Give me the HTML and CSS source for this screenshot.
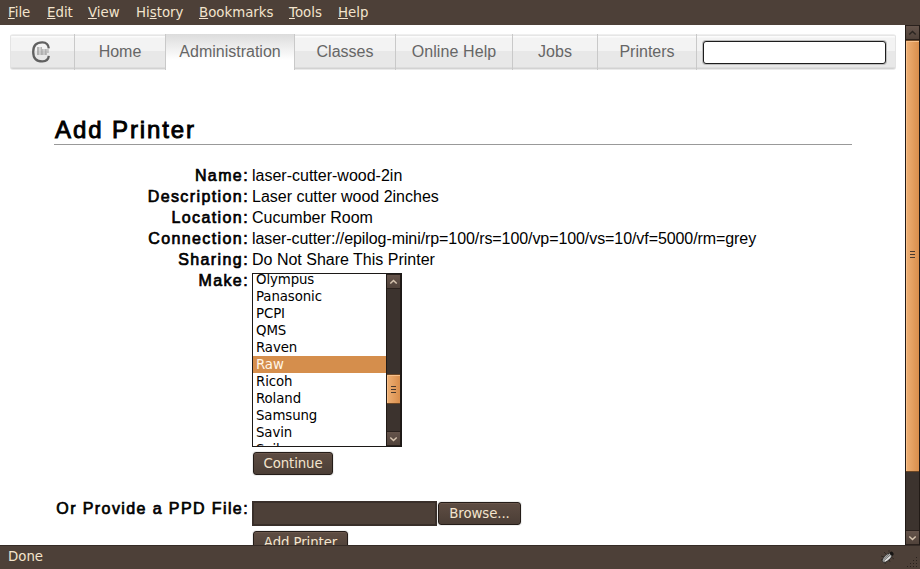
FILE: index.html
```html
<!DOCTYPE html>
<html lang="en">
<head>
<meta charset="utf-8">
<title>Add Printer</title>
<link rel="stylesheet" href="styles.css">
</head>
<body>
<nav class="menubar">
  <span class="m-file"><u>F</u>ile</span><span class="m-edit"><u>E</u>dit</span><span class="m-view"><u>V</u>iew</span><span class="m-history">Hi<u>s</u>tory</span><span class="m-bookmarks"><u>B</u>ookmarks</span><span class="m-tools"><u>T</u>ools</span><span class="m-help"><u>H</u>elp</span>
</nav>
<div class="viewport">
  <main class="page">
    <div class="tabs">
      <a class="tab logo"><svg width="20" height="22" viewBox="0 0 20 22"><path d="M17.8 7.4Q17.2 1.6 11.5 1.4Q2.2 1.2 2.2 10.9T11.5 20.4Q17.2 20.2 17.8 14.8" fill="none" stroke="#606060" stroke-width="2.3"/><path d="M6 7h5M6 9h12M6 11h12M6 13h10" fill="none" stroke="#777" stroke-width="1.2" stroke-dasharray="2 .5 1 .4"/></svg></a>
      <a class="tab home">Home</a>
      <a class="tab admin active">Administration</a>
      <a class="tab classes">Classes</a>
      <a class="tab online">Online Help</a>
      <a class="tab jobs">Jobs</a>
      <a class="tab printers">Printers</a>
      <div class="search"><input type="text" aria-label="Search"></div>
    </div>
    <section class="content">
      <h2>Add Printer</h2>
      <div class="form">
        <div class="label">Name:</div><div>laser-cutter-wood-2in</div>
        <div class="label">Description:</div><div>Laser cutter wood 2inches</div>
        <div class="label">Location:</div><div>Cucumber Room</div>
        <div class="label">Connection:</div><div class="uri">laser-cutter://epilog-mini/rp=100/rs=100/vp=100/vs=10/vf=5000/rm=grey</div>
        <div class="label">Sharing:</div><div>Do Not Share This Printer</div>
        <div class="label">Make:</div>
        <div class="make">
          <div class="listbox">
            <div class="options">
              <div>Olympus</div><div>Panasonic</div><div>PCPI</div><div>QMS</div><div>Raven</div><div class="selected">Raw</div><div>Ricoh</div><div>Roland</div><div>Samsung</div><div>Savin</div><div>Seiko</div>
            </div>
            <div class="scrollbar list-scroll">
              <div class="arrow"><svg width="9" height="6" viewBox="0 0 9 6"><path d="M1.3 4.5l3.2-3 3.2 3"/></svg></div>
              <div class="track"><div class="thumb"><i></i><i></i><i></i></div></div>
              <div class="arrow"><svg width="9" height="6" viewBox="0 0 9 6"><path d="M1.3 1.5l3.2 3 3.2-3"/></svg></div>
            </div>
          </div>
          <button class="continue">Continue</button>
        </div>
        <div class="label">Or Provide a PPD File:</div>
        <div class="upload">
          <div class="file-row"><div class="file"></div><button class="browse">Browse...</button></div>
          <button class="add">Add Printer</button>
        </div>
      </div>
    </section>
  </main>
  <div class="scrollbar page-scroll">
    <div class="arrow disabled"><svg width="9" height="6" viewBox="0 0 9 6"><path d="M1.3 4.5l3.2-3 3.2 3"/></svg></div>
    <div class="track"><div class="thumb"><i></i><i></i><i></i></div></div>
    <div class="arrow"><svg width="9" height="6" viewBox="0 0 9 6"><path d="M1.3 1.5l3.2 3 3.2-3"/></svg></div>
  </div>
</div>
<footer class="status"><span>Done</span>
  <svg class="bug" width="18" height="18" viewBox="0 0 18 18"><path d="M5 4l2 2M10 2l0 2M2 8l3 1M2 12l2-1M6 16l1-3M11 14l-1-3M15 11l-3-2" fill="none" stroke="#2b2420" stroke-width=".8"/><g transform="rotate(-42 9 9)"><ellipse cx="8" cy="9" rx="6.2" ry="2.9" fill="#b6b6b4" stroke="#292725" stroke-width=".8"/><path d="M2 9h11M4 7.5h8" stroke="#666" stroke-width=".8"/><path d="M4 10.2h7" stroke="#eee"/><ellipse cx="14" cy="9" rx="1.7" ry="2.2" fill="#161413"/></g></svg>
  <svg class="grip" width="12" height="12" viewBox="0 0 12 12"><path d="M9 1h1v1H9zM6 4h1v1H6zM9 4h1v1H9zM3 7h1v1H3zM6 7h1v1H6zM9 7h1v1H9zM0 10h1v1H0zM3 10h1v1H3zM6 10h1v1H6zM9 10h1v1H9z" fill="#29211d"/></svg>
</footer>
</body>
</html>
```
FILE: styles.css
```css
* { box-sizing: border-box; }
body {
  margin: 0;
  height: 569px;
  display: flex;
  flex-direction: column;
  overflow: hidden;
  background: #fff;
  font: 16px/21px "Liberation Sans", Arial, sans-serif;
  color: #000;
}
.menubar, .status, .listbox, button {
  font-family: "DejaVu Sans", sans-serif;
  font-size: 13.33px;
}
.listbox, button { letter-spacing: -.1px; }
.menubar {
  height: 25px;
  flex: none;
  display: flex;
  padding: 1px 0 0 8px;
  line-height: 24px;
  background: #4d4038;
  color: #f3e4cd;
}
.menubar u { text-underline-offset: 1px; text-decoration-thickness: 1px; text-decoration-skip-ink: none; }
.m-file { width: 39px; }
.m-edit { width: 41px; }
.m-view { width: 48px; }
.m-history { width: 63px; }
.m-bookmarks { width: 90px; }
.m-tools { width: 49px; }

.viewport { height: 520px; flex: none; display: flex; overflow: hidden; }
.page { width: 905px; height: 520px; padding: 9px 9px 0 10px; overflow: hidden; }
.tabs {
  display: flex;
  height: 36px;
  border: 1px solid #e4e4e4;
  border-top-color: #efefef;
  border-bottom-color: #eaeaea;
  border-radius: 3px;
  background: linear-gradient(#e6e6e6 0 1px, #fcfcfc 1px 2px, #f3f3f3 3px 16px, #e8e8e8 16px 32px, #d2d2d2 33px);
}
.tab {
  display: block;
  height: 36px;
  margin-top: -1px;
  border-right: 1px solid #c9c9c9;
  line-height: 35px;
  text-align: center;
  color: #666;
}
.logo { width: 64px; padding: 7px 3px 0 0; line-height: 0; }
.home { width: 91px; }
.admin { width: 129px; }
.classes { width: 101px; }
.online { width: 117px; letter-spacing: .1px; }
.jobs { width: 85px; }
.printers { width: 99px; }
.active { background: linear-gradient(#dcdcdc, #fff 26px); }
.search { padding: 6px 0 0 6px; }
.search input {
  display: block;
  width: 183px;
  height: 23px;
  padding: 0 4px;
  border: 1px solid #1d1d1d;
  border-radius: 3px;
  background: #fff;
  box-shadow: 0 0 0 1px #bdbdbd;
}
.content { margin: 45px 44px 0; width: 798px; }
h2 {
  margin: 0;
  height: 30px;
  padding-left: 1px;
  border-bottom: 1px solid #999;
  font-size: 24px;
  line-height: 29px;
  font-weight: 400;
  letter-spacing: 1.9px;
  -webkit-text-stroke: .9px #000;
}
.form {
  display: grid;
  grid-template-columns: 196px 600px;
  column-gap: 2px;
  padding-top: 20px;
  white-space: nowrap;
}
.label { padding-right: 1px; text-align: right; letter-spacing: 1.4px; -webkit-text-stroke: .7px #000; }
.uri { letter-spacing: -.08px; }
.make { padding-top: 3px; height: 228px; }
.listbox {
  display: flex;
  width: 150px;
  height: 174px;
  border: 1px solid #1c1917;
  background: #fff;
  line-height: 17px;
}
.options { width: 133px; height: 172px; overflow: hidden; }
.options div { height: 17px; padding-left: 3px; }
.options div:first-child { height: 14px; line-height: 11px; }
.options .selected { background: #d58e4c; color: #fff6e8; }
.scrollbar { display: flex; flex-direction: column; flex: none; width: 15px; background: #3c332e; border: 1px solid #211a16; border-width: 0 1px; }
.arrow {
  height: 15px;
  flex: none;
  display: flex;
  align-items: center;
  justify-content: center;
  border: 1px solid #2a211d;
  border-width: 1px 0;
  background: linear-gradient(#65544b, #50423a);
}
.arrow path { fill: none; stroke: #d6c4af; stroke-width: 1.5; }
.arrow.disabled path { stroke: #2b2521; }
.track { flex: 1; }
.thumb {
  display: flex;
  flex-direction: column;
  align-items: center;
  justify-content: center;
  gap: 2px;
  border: 1px solid #6d4725;
  border-width: 1px 0;
  box-shadow: inset 1px 1px #f7c08b;
  background: linear-gradient(90deg, #eeb075, #d98e4c);
}
.thumb i { width: 5px; height: 1px; background: #49392e; }
.list-scroll .track { padding-top: 85px; }
.list-scroll .thumb { height: 30px; }
.page-scroll .thumb { height: 432px; padding-bottom: 4px; }
button {
  display: block;
  height: 23px;
  padding: 0;
  border: 1px solid #241c18;
  border-radius: 3px;
  background: linear-gradient(#5e4d43, #4b3e36);
  box-shadow: inset 0 1px #6a574c, 0 0 0 1px #eeeeed;
  color: #f3e4cd;
  line-height: 20px;
  text-align: center;
}
.continue { width: 80px; margin: 5px 0 0 1px; }
.upload { padding-top: 3px; }
.file-row { display: flex; height: 25px; }
.file { width: 185px; height: 25px; border: 2px solid #392f2a; background: #4d4038; }
.browse { width: 83px; margin: 1px 0 0 1px; }
.add { width: 95px; margin: 5px 0 0 1px; }
.status {
  height: 24px;
  flex: none;
  display: flex;
  padding-left: 8px;
  border-top: 1px solid #352b26;
  background: #4d4038;
  color: #f3e4cd;
  line-height: 21px;
}
.bug { margin: 2px 0 0 auto; }
.grip { margin: 10px 1px 0 10px; }
```
